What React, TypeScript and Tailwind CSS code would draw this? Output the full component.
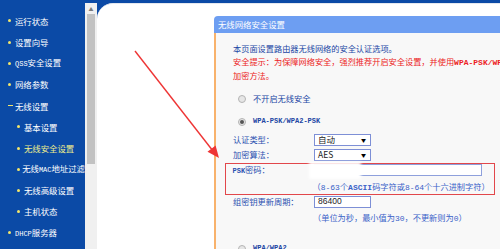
import React from "react";

const cjk = { fontFamily: '"Noto Sans CJK SC", "Noto Sans", sans-serif' };
const mono = { fontFamily: '"Liberation Mono", "DejaVu Sans Mono", monospace' };

function Bullet({ dash }: { dash?: boolean }) {
  if (dash)
    return <span className="inline-block w-[5px] h-[1.5px] bg-[#f3e66a]" />;
  return <span className="inline-block w-[3px] h-[3px] rounded-full bg-[#f3e66a]" />;
}

function NavItem({
  label,
  sub,
  dash,
  active,
}: {
  label: React.ReactNode;
  sub?: boolean;
  dash?: boolean;
  active?: boolean;
}) {
  return (
    <div
      className={`flex items-center h-[21.2px] whitespace-nowrap ${sub ? "pl-[17px]" : "pl-[8px]"}`}
    >
      <span className="w-[7px] flex items-center">
        <Bullet dash={dash} />
      </span>
      <span className={active ? "text-[#eeee8c]" : "text-white"}>{label}</span>
    </div>
  );
}

function Radio({ checked }: { checked?: boolean }) {
  return (
    <span className="w-[8px] h-[8px] rounded-full border border-[#b4b4b4] bg-[#e6e6e6] flex items-center justify-center">
      {checked && <span className="w-[4px] h-[4px] rounded-full bg-[#555]" />}
    </span>
  );
}

function Select({ value }: { value: string }) {
  return (
    <div className="w-[57px] h-[12px] border border-[#7d8fd6] bg-white flex items-center justify-between pl-[3px] pr-[4px]">
      <span className="text-[8.5px] leading-none text-[#222]" style={{ fontFamily: '"Noto Sans CJK SC", "Liberation Sans", sans-serif' }}>
        {value}
      </span>
      <span className="text-[5px] leading-none text-black">▼</span>
    </div>
  );
}

export default function App() {
  return (
    <div
      className="relative w-[500px] h-[249px] overflow-hidden bg-[#0b4aa6] flex"
      style={cjk}
    >
      {/* sidebar */}
      <div className="w-[85px] shrink-0 pt-[10.4px] text-[8.4px] leading-none">
        <NavItem label="运行状态" />
        <NavItem label="设置向导" />
        <NavItem
          label={
            <>
              <span className="text-[7px]" style={mono}>QSS</span>安全设置
            </>
          }
        />
        <NavItem label="网络参数" />
        <NavItem label="无线设置" dash />
        <NavItem label="基本设置" sub />
        <NavItem label="无线安全设置" sub active />
        <NavItem
          label={
            <>
              无线<span className="text-[7px]" style={mono}>MAC</span>地址过滤
            </>
          }
          sub
        />
        <NavItem label="无线高级设置" sub />
        <NavItem label="主机状态" sub />
        <NavItem
          label={
            <>
              <span className="text-[7px]" style={mono}>DHCP</span>服务器
            </>
          }
        />
      </div>

      {/* right area */}
      <div className="flex-1 flex mt-[3px] min-w-0">
        {/* scrollbar */}
        <div className="w-[12px] shrink-0 bg-[#f0f0f0] flex flex-col items-center">
          <div className="h-[11px] w-full flex items-center justify-center">
            <span className="text-[5px] leading-none text-[#7a7a7a]">▲</span>
          </div>
          <div className="w-[8px] h-[150px] bg-[#c2c2c2]" />
        </div>

        {/* content */}
        <div className="flex-1 min-w-0 bg-white rounded-tl-[16px] border-t border-[#e4e8ef] pl-[117px] pt-[12px] overflow-hidden">
          <div className="w-[300px]">
            <div className="h-[17px] bg-[#6d9ef2] rounded-tl-[4px] flex items-center pl-[4px]">
              <span className="text-[8.4px] leading-none text-white">无线网络安全设置</span>
            </div>
            <div className="border-l-2 border-[#f8b26c] bg-[#f8f8f8] pl-[17px] pt-[9px] h-[230px] text-[8.2px]">
              <div className="leading-[12.5px] whitespace-nowrap">
                <div className="text-[#2246a4]">本页面设置路由器无线网络的安全认证选项。</div>
                <div className="text-[#ec1c24]">
                  安全提示：为保障网络安全，强烈推荐开启安全设置，并使用
                  <span className="text-[8px] font-bold" style={mono}>WPA-PSK/WPA2-PSK</span>
                </div>
                <div className="text-[#ec1c24]">加密方法。</div>
              </div>

              <div className="mt-[11px] h-[12px] flex items-center ml-[5px] whitespace-nowrap">
                <Radio />
                <span className="ml-[7px] text-[#2246a4]">不开启无线安全</span>
              </div>
              <div className="mt-[11px] h-[12px] flex items-center ml-[5px] whitespace-nowrap">
                <Radio checked />
                <span className="ml-[7px] text-[7px] text-[#2246a4] font-bold" style={mono}>
                  WPA-PSK/WPA2-PSK
                </span>
              </div>

              <div className="mt-[6px] h-[12px] flex items-center">
                <span className="w-[81px] text-[#2b50b0]">认证类型：</span>
                <Select value="自动" />
              </div>
              <div className="mt-[3px] h-[12px] flex items-center">
                <span className="w-[81px] text-[#2b50b0]">加密算法：</span>
                <Select value="AES" />
              </div>

              <div className="relative mt-[2px] -ml-[8px] w-[270px] h-[32px] border-[1.5px] border-[#e2474b] pl-[6.5px] pt-[0.5px]">
                <div className="h-[12px] flex items-center">
                  <span className="w-[81px] text-[#2b50b0] whitespace-nowrap">
                    <span className="text-[7px] font-bold" style={mono}>PSK</span>密码：
                  </span>
                  <div className="relative w-[168px] h-[12px] border border-[#8ea0dc] bg-white">
                    <div className="absolute -left-[6px] -top-[3px] w-[52px] h-[17px] bg-white blur-[1.5px]" />
                  </div>
                </div>
                <div className="mt-[3.5px] pl-[80px] leading-[12px] whitespace-nowrap text-[#3a62c8]">
                  （<span className="text-[8px]" style={mono}>8-63</span>个<span className="text-[8px] font-bold" style={mono}>ASCII</span>码字符或<span className="text-[8px]" style={mono}>8-64</span>个十六进制字符）
                </div>
              </div>

              <div className="mt-[1px] h-[12px] flex items-center">
                <span className="w-[81px] text-[#2b50b0] whitespace-nowrap">组密钥更新周期：</span>
                <div className="w-[57px] h-[12px] border border-[#7d8fd6] bg-white flex items-center pl-[3px]">
                  <span className="text-[8.5px] leading-none text-[#222]" style={{ fontFamily: '"Liberation Sans", Arial, sans-serif' }}>
                    86400
                  </span>
                </div>
              </div>
              <div className="mt-[3px] pl-[80px] leading-[12px] whitespace-nowrap text-[#3a62c8]">
                （单位为秒，最小值为<span className="text-[8px]" style={mono}>30</span>，不更新则为<span className="text-[8px]" style={mono}>0</span>）
              </div>

              <div className="mt-[18px] h-[12px] flex items-center ml-[5px] whitespace-nowrap">
                <Radio />
                <span className="ml-[7px] text-[7px] text-[#2246a4] font-bold" style={mono}>
                  WPA/WPA2
                </span>
              </div>
            </div>
          </div>
        </div>
      </div>

      {/* red annotation arrow */}
      <svg
        className="absolute left-0 top-0 pointer-events-none"
        width="500"
        height="249"
        viewBox="0 0 500 249"
      >
        <line x1="135" y1="51" x2="213" y2="151" stroke="#ee3535" strokeWidth="1.4" />
        <polygon points="219,158 207.5,151.8 215.6,145.4" fill="#ee3535" />
      </svg>
    </div>
  );
}
